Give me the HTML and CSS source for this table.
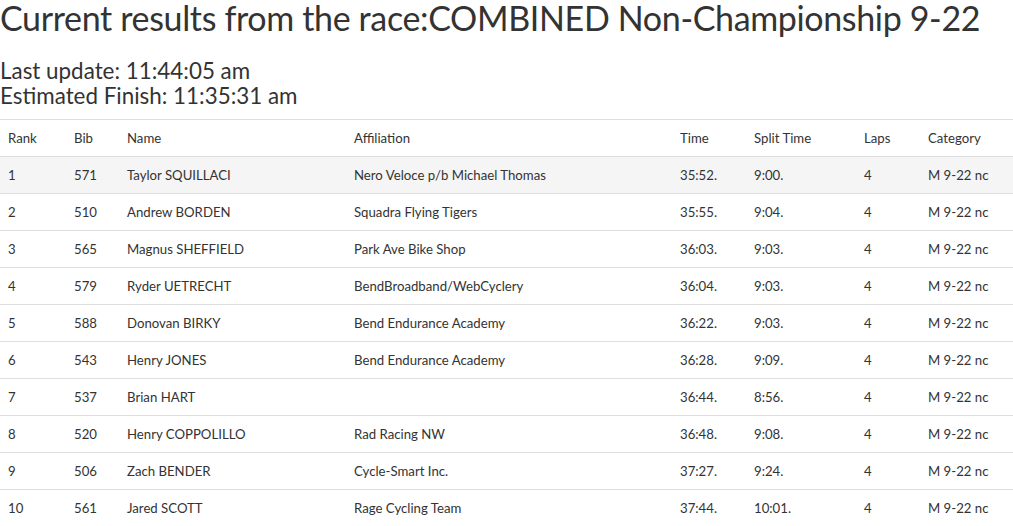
FILE: index.html
```html
<!DOCTYPE html>
<html>
<head>
<meta charset="utf-8">
<link rel="stylesheet" href="styles.css">
</head>
<body>
<h1 class="title">Current results from the race:COMBINED Non-Championship 9-22</h1>
<h3 class="meta">Last update: 11:44:05 am<br>Estimated Finish: 11:35:31 am</h3>
<table class="results">
<colgroup>
<col class="c-rank"><col class="c-bib"><col class="c-name"><col class="c-aff"><col class="c-time"><col class="c-split"><col class="c-laps"><col class="c-cat">
</colgroup>
<thead>
<tr><th>Rank</th><th>Bib</th><th>Name</th><th>Affiliation</th><th>Time</th><th>Split Time</th><th>Laps</th><th>Category</th></tr>
</thead>
<tbody>
<tr class="hover"><td>1</td><td>571</td><td>Taylor SQUILLACI</td><td>Nero Veloce p/b Michael Thomas</td><td>35:52.</td><td>9:00.</td><td>4</td><td>M 9-22 nc</td></tr>
<tr><td>2</td><td>510</td><td>Andrew BORDEN</td><td>Squadra Flying Tigers</td><td>35:55.</td><td>9:04.</td><td>4</td><td>M 9-22 nc</td></tr>
<tr><td>3</td><td>565</td><td>Magnus SHEFFIELD</td><td>Park Ave Bike Shop</td><td>36:03.</td><td>9:03.</td><td>4</td><td>M 9-22 nc</td></tr>
<tr><td>4</td><td>579</td><td>Ryder UETRECHT</td><td>BendBroadband/WebCyclery</td><td>36:04.</td><td>9:03.</td><td>4</td><td>M 9-22 nc</td></tr>
<tr><td>5</td><td>588</td><td>Donovan BIRKY</td><td>Bend Endurance Academy</td><td>36:22.</td><td>9:03.</td><td>4</td><td>M 9-22 nc</td></tr>
<tr><td>6</td><td>543</td><td>Henry JONES</td><td>Bend Endurance Academy</td><td>36:28.</td><td>9:09.</td><td>4</td><td>M 9-22 nc</td></tr>
<tr><td>7</td><td>537</td><td>Brian HART</td><td></td><td>36:44.</td><td>8:56.</td><td>4</td><td>M 9-22 nc</td></tr>
<tr><td>8</td><td>520</td><td>Henry COPPOLILLO</td><td>Rad Racing NW</td><td>36:48.</td><td>9:08.</td><td>4</td><td>M 9-22 nc</td></tr>
<tr><td>9</td><td>506</td><td>Zach BENDER</td><td>Cycle-Smart Inc.</td><td>37:27.</td><td>9:24.</td><td>4</td><td>M 9-22 nc</td></tr>
<tr><td>10</td><td>561</td><td>Jared SCOTT</td><td>Rage Cycling Team</td><td>37:44.</td><td>10:01.</td><td>4</td><td>M 9-22 nc</td></tr>
</tbody>
</table>
</body>
</html>
```
FILE: styles.css
```css
html, body {
  margin: 0;
  padding: 0;
  background: #fff;
}
body {
  font-family: "Lato", "Open Sans", sans-serif;
  color: #333;
  font-size: 13.2px;
  line-height: 20px;
}
.title {
  font-size: 34px;
  font-weight: 400;
  line-height: 36px;
  margin: 0 0 22px 0;
  letter-spacing: -0.35px;
  white-space: nowrap;
}
.meta {
  font-size: 22.4px;
  font-weight: 400;
  line-height: 25px;
  margin: 0 0 11px 0;
}
.results {
  width: 1013px;
  border-collapse: collapse;
  table-layout: fixed;
}
.results th,
.results td {
  text-align: left;
  font-weight: 400;
  padding: 8px;
  line-height: 20px;
  border-top: 1px solid #ddd;
  white-space: nowrap;
}
.results tbody tr.hover td {
  background: #f5f5f5;
}
.c-rank { width: 66px; }
.c-bib { width: 53px; }
.c-name { width: 227px; }
.c-aff { width: 326px; }
.c-time { width: 74px; }
.c-split { width: 110px; }
.c-laps { width: 64px; }
.c-cat { width: 93px; }
```
